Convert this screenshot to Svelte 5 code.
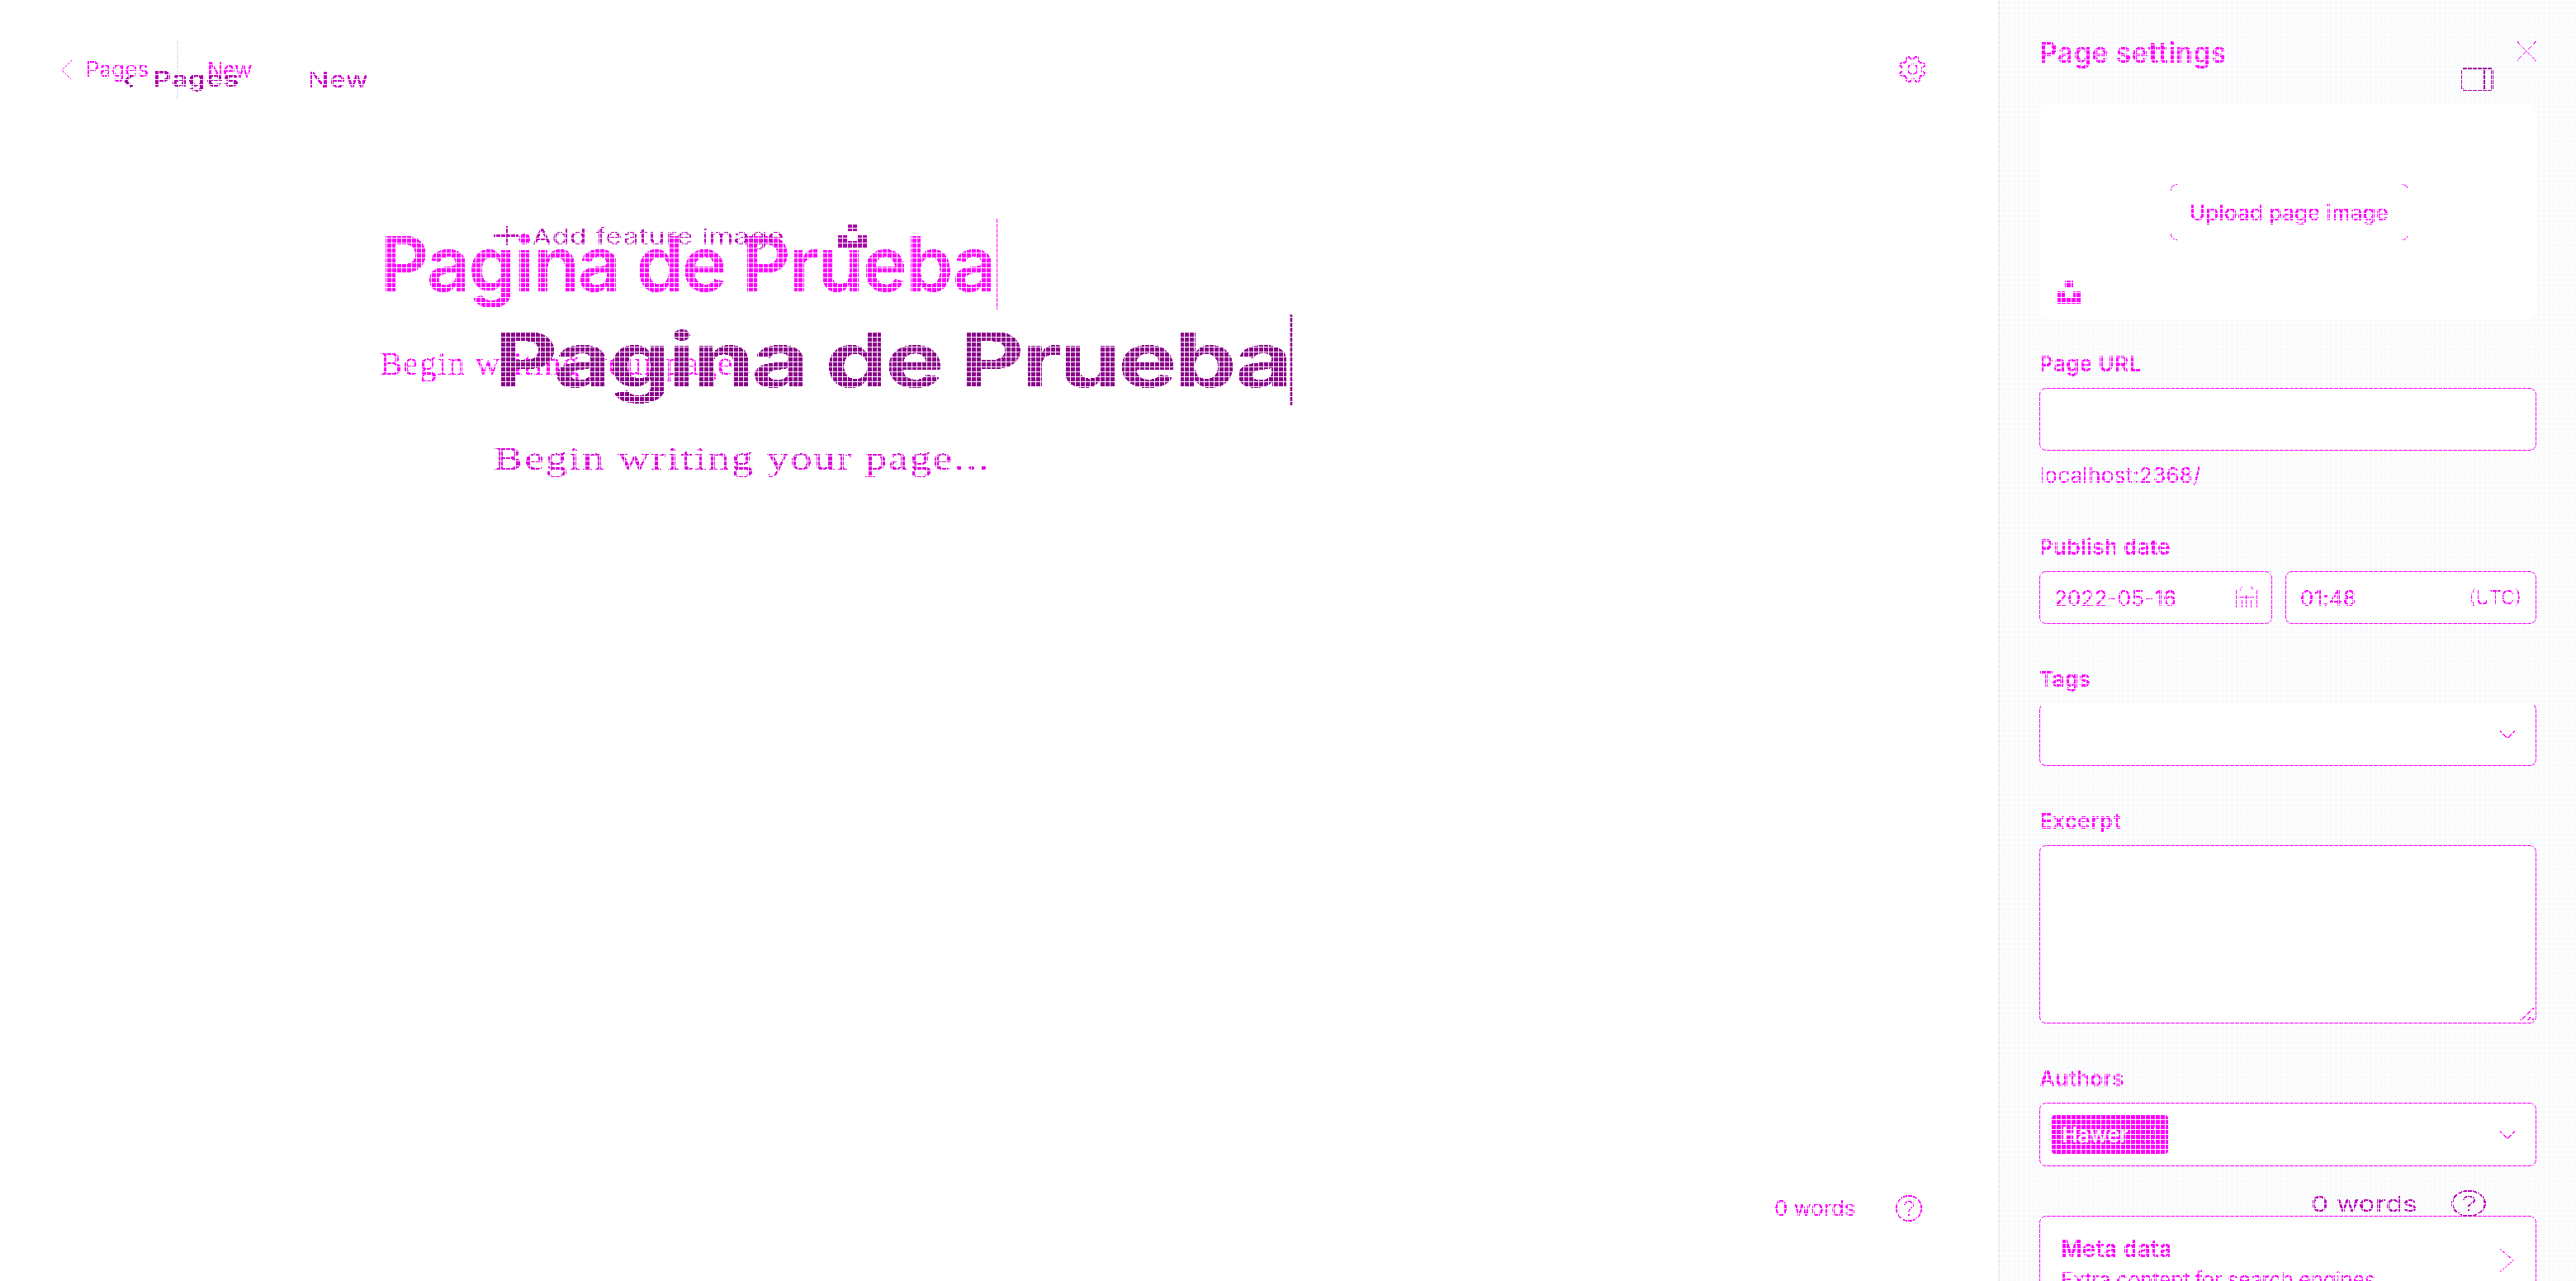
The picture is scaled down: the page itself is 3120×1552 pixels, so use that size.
<script>
  const title = 'Pagina de Prueba';
  const placeholder = 'Begin writing your page...';
</script>

{#snippet upload()}
  <svg class="crisp" width="28" height="28" viewBox="0 0 28 28"><path fill="currentColor" d="M9 0h10v8H9zM0 13h9v7h10v-7h9v15H0z" /></svg>
{/snippet}

{#snippet help()}
  <svg class="help crisp" width="32" height="32" viewBox="0 0 32 32" fill="none" stroke="currentColor" stroke-width="1.5">
    <circle cx="16" cy="16" r="15.2" />
    <path d="M11 12.2c0-6.2 10.4-6 10.4-.3 0 3.800-5.400 3.600-5.400 7.800M16 22.500v2.500" />
  </svg>
{/snippet}

{#snippet down()}
  <svg class="down crisp" width="20" height="12" viewBox="0 0 20 12" fill="none" stroke="currentColor" stroke-width="1.3"><path d="M1 1.500l9 8.500 9-8.500" /></svg>
{/snippet}

<svg class="defs" width="0" height="0">
  <filter id="crisp" x="-5%" y="-5%" width="110%" height="110%" color-interpolation-filters="sRGB">
    <feComponentTransfer><feFuncA type="discrete" tableValues="0 0 1 1 1" /></feComponentTransfer>
  </filter>
</svg>

<div class="app">
  <main class="editor">
    <header>
      <svg class="back crisp" width="14" height="24" viewBox="0 0 14 24" fill="none" stroke="currentColor"><path d="M12.500 .5L1 12l11.500 11.500" /></svg>
      <span class="pages crisp">Pages</span>
      <i class="rule"></i>
      <span class="new crisp">New</span>
      <svg class="gear crisp" width="34" height="34" viewBox="0 0 34 34" fill="none" stroke="currentColor" stroke-width="1.600">
        <path d="M14 5.500L12.500 1.500 9.500 2.500 8.500 7.500 7 9 2 9.500 1.200 12.500 4.500 15v4L1.200 21.500 2 24.500 7 25l1.500 1.500 1 5 3 1 3-3.500h3l3 3.500 3-1 1-5L25.500 25l5-.5 1-3-3.300-2.500v-4l3.300-2.500-1-3-5-.5L24 7.500l-1-5-3-1-3 3.500h-2z" />
        <circle cx="16.500" cy="17" r="6" />
      </svg>
    </header>
    <div class="doc">
      <div class="titlerow"><h1 class="crisp">{title}</h1><i class="caret"></i></div>
      <p class="crisp">{placeholder}</p>
    </div>
    <footer><span class="words crisp">0 words</span>{@render help()}</footer>
  </main>

  <aside>
    <div class="head">
      <h2 class="crisp">Page settings</h2>
      <svg class="crisp" width="24" height="26" viewBox="0 0 24 26" stroke="currentColor" fill="none"><path d="M.5 1l23 24M23.500 1L.5 25" /></svg>
    </div>
    <div class="image">
      <div class="button">
        <svg class="corners crisp" width="288" height="68" viewBox="0 0 288 68" fill="none" stroke="currentColor"><path d="M.5 8Q.5 .5 8 .5M280 .5q7.500 0 7.500 7.500M287.500 60q0 7.500-7.500 7.500M8 67.500Q.5 67.500 .5 60" /></svg>
        <span class="crisp">Upload page image</span>
      </div>
      <div class="unsplash">{@render upload()}</div>
    </div>

    <label class="url crisp" for="url">Page URL</label>
    <div class="box" id="url"></div>
    <div class="hint crisp">localhost:2368/</div>

    <div class="label date crisp">Publish date</div>
    <div class="dates">
      <div class="box d1">
        <span class="crisp dv">2022-05-16</span>
        <svg class="crisp" width="26" height="26" viewBox="0 0 26 26" fill="none" stroke="currentColor"><path d="M.5 4v21M25.500 4v21M5.500 2v2.500M7 .5h1M18 .5h1.500M20 2v2.500M3 12.500h20M7.500 15v10M12.500 10v15M18.500 15v10" /></svg>
      </div>
      <div class="box d2"><span class="crisp tv">01:48</span><span class="utc crisp">(UTC)</span></div>
    </div>

    <div class="label crisp tags">Tags</div>
    <div class="box select topless">{@render down()}</div>

    <div class="label crisp excerpt">Excerpt</div>
    <div class="box area">
      <svg class="crisp" width="17" height="16" viewBox="0 0 17 16" fill="none" stroke="currentColor" stroke-width="1.400"><path d="M.5 15.500L16.500 .5M9 15.500l4-4.500M15 15.500l1.500-2" /></svg>
    </div>

    <div class="label crisp authors">Authors</div>
    <div class="box select author">
      <span class="tag"><span class="name">Hawer</span>
        <svg width="14" height="18" viewBox="0 0 14 18" fill="#fff"><path d="M12 0h1v2h-1zM0 16h1v1H0zM6 11h1v1H6zM8 8h1v1H8zM11 5h1v1h-1zM12 15h1v2h-1z" /></svg>
      </span>
      {@render down()}
    </div>

    <div class="box meta">
      <div>
        <h3 class="crisp">Meta data</h3>
        <p class="crisp">Extra content for search engines</p>
      </div>
      <svg class="crisp" width="17" height="28" viewBox="0 0 17 28" fill="none" stroke="currentColor"><path d="M.5 .5l15.500 13.500L.5 27.500" /></svg>
    </div>
  </aside>

  <!-- wide revision of the editor, drawn over the first -->
  <div class="wide">
    <header>
      <svg class="back2 crisp" width="9" height="16" viewBox="0 0 9 16" fill="none" stroke="currentColor" stroke-width="2.600"><path d="M8 1L1.500 8 8 15" /></svg>
      <span class="pages2 crisp">Pages</span>
      <span class="new2 crisp">New</span>
      <svg class="panel crisp" width="30" height="28" viewBox="0 0 30 28" fill="none" stroke="currentColor" stroke-width="1.800"><rect x="1" y="1" width="28" height="26" rx="2" /><path d="M21.500 1v26" /></svg>
    </header>
    <div class="doc">
      <div class="feature">
        <svg class="crisp" width="23" height="23" viewBox="0 0 23 23" stroke="currentColor" stroke-width="1.800"><path d="M0 11.500h23M12 0v23" /></svg>
        <span class="crisp">Add feature image</span>
        <div class="up">{@render upload()}</div>
      </div>
      <div class="titlerow"><h1 class="crisp">{title}</h1><i class="caret"></i></div>
      <p class="crisp">{placeholder}</p>
    </div>
    <footer><span class="words crisp">0 words</span>{@render help()}</footer>
  </div>
  <div class="grid"></div>
</div>

<style>
  :global(body) { margin: 0; background: #fff; overflow: hidden; }
  .defs { position: absolute; }
  .crisp { filter: url(#crisp); }
  .app {
    position: relative; display: grid; grid-template-columns: 2420px 700px;
    width: 3120px; height: 1552px; overflow: hidden; background: #fff;
    color: #f0f; font: 400 26px/32px Inter, sans-serif;
  }
  .app * { box-sizing: border-box; }
  svg { display: block; flex: none; overflow: visible; }
  h1, h2, h3, p { margin: 0; white-space: nowrap; }
  span { white-space: nowrap; }
  i { display: block; flex: none; }

  .editor, .wide { display: flex; flex-direction: column; height: 1552px; }
  header { display: flex; align-items: flex-start; height: 265px; }
  .back { margin: 73px 0 0 74px; }
  .pages { margin: 68px 0 0 16px; width: 78px; }
  .rule { width: 2px; height: 71px; margin: 49px 0 0 32px; background: #e5ecf2; }
  .new { margin: 69px 0 0 35px; letter-spacing: -.5px; }
  .gear { margin: 67px 86px 0 auto; }
  .doc { flex: 1; padding-left: 460px; }
  .titlerow { display: flex; }
  h1 { font-size: 92px; line-height: 110px; font-weight: 600; width: 747px; letter-spacing: -1.900px; word-spacing: -1.500px; }
  .caret { width: 1px; height: 110px; background: #f0f; }
  .doc p { margin-top: 41px; font: 41px/48px "Liberation Serif", serif; letter-spacing: 1.250px; width: max-content; }
  footer { display: flex; height: 103px; }
  .editor footer .words { margin-left: 2149px; width: 147px; letter-spacing: -.100px; }
  .editor footer { height: 104px; }
  .editor .help { margin-top: 0; }

  aside { border-left: 2px solid #e5ecf2; background: #f9fafc; padding: 44px 48px 0; height: 1552px; overflow: hidden; }
  .head { display: flex; justify-content: space-between; height: 82px; }
  .head svg { margin-top: 5px; }
  h2 { font-size: 34px; line-height: 40px; font-weight: 600; letter-spacing: .350px; }
  .image { height: 261px; padding: 97px 0 0 159px; border-radius: 10px; background: #fff; }
  .button { display: grid; width: 288px; height: 68px; align-items: center; justify-items: center; }
  .button > * { grid-area: 1 / 1; }
  .button span { margin: 2px 0 0 -1px; font-weight: 500; }
  .unsplash { margin: 49px 0 0 -137px; }
  label, .label { display: block; margin: 51px 0 13px; font-weight: 600; letter-spacing: .350px; width: max-content; }
  .url { margin-top: 38px; }
  .date { margin-top: 55px; }
  .hint { margin: 14px 0 0; width: max-content; letter-spacing: .250px; }
  .box { border: 1px solid #f0f; border-radius: 8px; background: #fff; height: 76px; }
  .dates { display: grid; grid-template-columns: 282px 304px; gap: 16px; }
  .dates .box { display: flex; justify-content: space-between; align-items: center; height: 64px; padding: 0 17px 0 18px; }
  .dv, .tv { margin-left: -1px; padding-top: 2px; letter-spacing: .150px; }
  .dates .d2 { padding-right: 17px; }
  .utc { font-size: 23px; font-weight: 300; }
  .select { display: flex; align-items: center; padding: 0 24px 0 14px; }
  .down { margin-left: auto; }
  .topless { border-top-color: #fff; }
  .area { display: flex; height: 216px; align-items: flex-end; justify-content: flex-end; padding: 2px; }
  .author { height: 77px; }
  .tag { display: flex; align-items: center; width: 141px; height: 47px; padding-left: 12px; border-radius: 4px; background: #f0f; color: #fff; }
  .name { width: 100px; font-weight: 500; }
  .meta { display: flex; justify-content: space-between; margin-top: 60px; height: 160px; padding: 23px 26px 0 25px; }
  .meta svg { margin-top: 16px; }
  h3 { font-size: 28px; line-height: 32px; font-weight: 600; }
  .meta p { margin-top: 6px; letter-spacing: -.600px; }

  .wide { position: absolute; left: 0; top: 0; width: 2400px; transform: scaleX(1.3); transform-origin: 0 0; color: #c0c; }
  .wide header { height: 271px; }
  .back2 { margin: 90px 0 0 115px; color: #909; }
  .pages2 { margin: 80px 0 0 19px; width: 80px; font-weight: 600; color: #a0a; letter-spacing: .500px; }
  .new2 { margin: 81px 0 0 64px; letter-spacing: .300px; }
  .panel { margin: 82px 77px 0 auto; color: #a000a0; }
  .feature { display: flex; color: #b0b; }
  .feature svg { margin-top: 3px; }
  .feature span { margin-left: 13px; width: 238px; letter-spacing: .500px; }
  .feature .up { margin: -2px 0 0 46px; color: #a0a; }
  .wide .titlerow { margin-top: 78px; color: #8b008b; }
  .wide h1 { width: 741.500px; font-weight: 700; letter-spacing: -2.350px; word-spacing: -2px; }
  .wide .caret { width: 2.500px; background: #8b008b; }
  .wide .doc p { margin-top: 40px; color: #d0d; }
  .wide footer { height: 110px; color: #b0b; }
  .wide footer .words { margin: 1px 0 0 2153px; width: 131px; }

  .grid {
    position: absolute; inset: 0; pointer-events: none;
    background:
      repeating-linear-gradient(90deg, #fff 0 1px, transparent 1px 6px),
      repeating-linear-gradient(180deg, #fff 0 1px, transparent 1px 6px);
  }
</style>
